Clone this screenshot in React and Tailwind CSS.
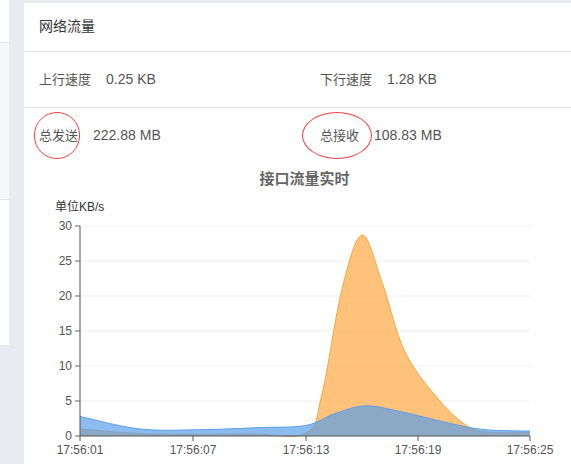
import React from 'react';

const X = (x) => x - 24;
const Y = (v) => 240 - v * 7;
const pts = (arr) => arr.map(([x, v]) => [X(x), Y(v)]);

function smooth(p) {
  let d = `M${p[0][0]},${p[0][1]}`;
  for (let i = 0; i < p.length - 1; i++) {
    const p0 = p[i - 1] || p[i], p1 = p[i], p2 = p[i + 1], p3 = p[i + 2] || p2;
    const c1 = [p1[0] + (p2[0] - p0[0]) / 6, p1[1] + (p2[1] - p0[1]) / 6];
    const c2 = [p2[0] - (p3[0] - p1[0]) / 6, p2[1] - (p3[1] - p1[1]) / 6];
    d += ` C${c1[0]},${c1[1]} ${c2[0]},${c2[1]} ${p2[0]},${p2[1]}`;
  }
  return d;
}

const orange = pts([[80, 1.0], [150, 0.3], [250, 0.3], [306, 0.4], [322, 6], [342, 21], [362, 28.7], [382, 22], [405, 12], [440, 5], [470, 1.2], [495, 0.5], [530, 0.5]]);
const blue = pts([[80, 2.8], [140, 1.0], [200, 0.9], [260, 1.2], [306, 1.5], [335, 3.2], [365, 4.3], [400, 3.5], [450, 1.8], [485, 0.9], [530, 0.7]]);

function area(p) {
  return `${smooth(p)} L${p[p.length - 1][0]},240 L${p[0][0]},240 Z`;
}

function Chart() {
  const ticks = [0, 5, 10, 15, 20, 25, 30];
  const xl = [['17:56:01', 80], ['17:56:07', 193], ['17:56:13', 306], ['17:56:19', 418], ['17:56:25', 530]];
  return (
    <svg width="547" height="269" className="block mt-[2px]" style={{ fontFamily: '"Liberation Sans", "Noto Sans CJK SC", sans-serif' }}>
      <text x="31" y="15" fontSize="12" fill="#333">单位KB/s</text>
      {ticks.map((t) => (
        <g key={t}>
          {t > 0 && <line x1={X(80)} x2={X(530)} y1={Y(t)} y2={Y(t)} stroke="#eeeeee" />}
          <line x1={X(75)} x2={X(80)} y1={Y(t)} y2={Y(t)} stroke="#666" />
          <text x={X(72)} y={Y(t) + 4} fontSize="12" fill="#555" textAnchor="end">{t}</text>
        </g>
      ))}
      <path d={area(orange)} fill="#ffb35a" fillOpacity="0.8" />
      <path d={smooth(orange)} fill="none" stroke="#f5a742" strokeWidth="1" />
      <path d={area(blue)} fill="#5a9ee8" fillOpacity="0.7" />
      <path d={smooth(blue)} fill="none" stroke="#5a9ee8" strokeWidth="1" />
      <line x1={X(80)} x2={X(80)} y1={Y(30)} y2={240} stroke="#555" />
      <line x1={X(80)} x2={X(530)} y1={240} y2={240} stroke="#555" />
      {xl.map(([l, x]) => (
        <g key={l}>
          <line x1={X(x)} x2={X(x)} y1={240} y2={245} stroke="#555" />
          <text x={X(x)} y={258} fontSize="12" fill="#555" textAnchor="middle">{l}</text>
        </g>
      ))}
    </svg>
  );
}

export default function App() {
  return (
    <div className="flex w-[571px] h-[464px] overflow-hidden bg-[#e9ebf0] text-[#555]" style={{ fontFamily: '"Liberation Sans", "Noto Sans CJK SC", sans-serif' }}>
      <div className="w-[9px] shrink-0 flex flex-col">
        <div className="h-[43px] bg-white border-b border-[#e5e5e5]" />
        <div className="h-[157px] bg-[#f7f7f7] border-b border-[#e5e5e5]" />
        <div className="h-[146px] bg-white border-b border-[#e5e5e5]" />
      </div>
      <div className="ml-[15px] mt-[3px] flex-1 bg-white flex flex-col">
        <div className="h-[49px] flex items-center px-[15px] text-[14px] text-[#333] border-b border-[#e5e5e5]">网络流量</div>
        <div className="h-[56px] flex items-center px-[15px] text-[13px] border-b border-[#e5e5e5]">
          <div className="w-[281px] flex items-center gap-[15px]"><span>上行速度</span><span className="text-[14px]">0.25 KB</span></div>
          <div className="flex items-center gap-[15px]"><span>下行速度</span><span className="text-[14px]">1.28 KB</span></div>
        </div>
        <div className="h-[56px] flex items-center px-[15px] text-[13px]">
          <div className="w-[281px] flex items-center gap-[15px]">
            <span className="relative">总发送<span className="absolute left-[-5px] top-[-14px] w-[46px] h-[47px] rounded-full border border-[#f04040]" /></span>
            <span className="text-[14px]">222.88 MB</span>
          </div>
          <div className="flex items-center gap-[15px]">
            <span className="relative">总接收<span className="absolute left-[-18px] top-[-14px] w-[70px] h-[47px] rounded-[50%] border border-[#f04040]" /></span>
            <span className="text-[14px]">108.83 MB</span>
          </div>
        </div>
        <div className="text-center text-[15px] font-bold text-[#666] h-[30px] leading-[30px] pl-[14px]">接口流量实时</div>
        <Chart />
      </div>
    </div>
  );
}
